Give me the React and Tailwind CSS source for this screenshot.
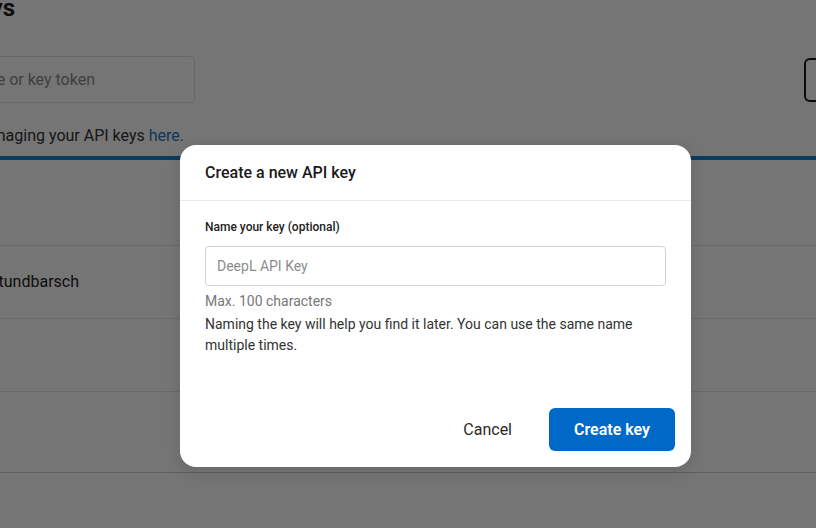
import React from 'react';

const font = { fontFamily: 'Roboto, "Noto Sans", sans-serif' };

// Page text that runs off the left edge: anchored by its right end
const Clip = ({ width, className = '', children }) => (
    <div className={`flex justify-end ${className}`} style={{ width }}>
        <span className="whitespace-nowrap shrink-0">{children}</span>
    </div>
);

const KeysPage = () => (
    <div className="flex flex-col w-full">
        <Clip width={15} className="mt-[-7px] text-[24px] leading-[30px] font-bold text-[#1b1b1b]">
            API Keys
        </Clip>

        <div className="flex items-center justify-between mt-[33px]">
            <div className="w-[195px] h-[47px] border border-[#e2e2e2] rounded-r-[5px] border-l-0 flex items-center">
                <Clip width={95} className="text-[16px] text-[#8a8a8a]">
                    Search by key name or key token
                </Clip>
            </div>
            <div className="w-[20px] h-[44px] border-2 border-r-0 border-[#1b1b1b] rounded-l-[6px] mr-[-8px]" />
        </div>

        <Clip width={184} className="mt-[21px] text-[16px] leading-[24px] text-[#333]">
            Learn more about managing your API keys <span className="text-[#1f7bc1]">here.</span>
        </Clip>

        <div className="mt-[8px] h-[4px] bg-[#1a83c9]" />

        <div className="h-[86px] border-b border-[#e6e6e6]" />
        <div className="h-[73px] border-b border-[#e6e6e6] flex items-center">
            <Clip width={79} className="text-[16px] text-[#222]">
                Stundbarsch
            </Clip>
        </div>
        <div className="h-[73px] border-b border-[#e6e6e6]" />
        <div className="h-[81px] border-b border-[#cfcfcf]" />
    </div>
);

const CreateKeyDialog = () => (
    <div className="w-[511px] h-[322px] bg-white rounded-[16px] shadow-[0_4px_16px_rgba(0,0,0,0.12)] flex flex-col">
        <div className="h-[56px] px-[25px] flex items-center border-b border-[#e9e9e9]">
            <h2 className="text-[16px] font-medium text-[#1a1a1a] pt-[1px]">Create a new API key</h2>
        </div>

        <div className="px-[25px] pt-[18px] flex flex-col">
            <label className="text-[12px] leading-[16px] font-medium text-[#222]">Name your key (optional)</label>
            <input
                className="mt-[11px] h-[40px] w-full border border-[#d2d2d2] rounded-[4px] px-[11px] text-[14px] placeholder:text-[#8c8c8c] outline-none"
                placeholder="DeepL API Key"
                style={font}
            />
            <p className="mt-[5px] text-[14px] leading-[21px] text-[#777]">Max. 100 characters</p>
            <p className="mt-[2px] text-[14px] leading-[21px] text-[#333]">
                Naming the key will help you find it later. You can use the same name multiple times.
            </p>
        </div>

        <div className="mt-auto flex items-center justify-end gap-[21px] pr-[16px] pb-[16px]">
            <button className="h-[43px] px-[16px] text-[16px] text-[#2a2a2a]">Cancel</button>
            <button className="h-[43px] w-[126px] rounded-[6px] bg-[#0069c8] text-white text-[16px] font-semibold">
                Create key
            </button>
        </div>
    </div>
);

const App = () => (
    <div className="relative w-[816px] h-[528px] overflow-hidden bg-white" style={font}>
        <KeysPage />
        <div className="absolute inset-0 bg-black/[0.54] pt-[145px] pl-[180px]">
            <CreateKeyDialog />
        </div>
    </div>
);

export default App;
